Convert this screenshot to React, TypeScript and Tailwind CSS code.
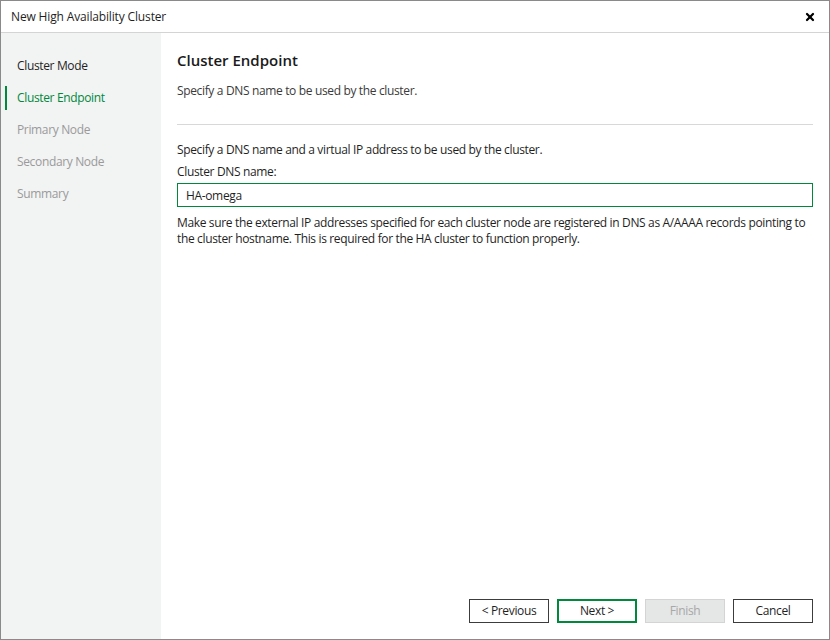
import { X } from 'lucide-react'

const steps = [
  { name: 'Cluster Mode', state: 'done' },
  { name: 'Cluster Endpoint', state: 'active' },
  { name: 'Primary Node', state: 'todo' },
  { name: 'Secondary Node', state: 'todo' },
  { name: 'Summary', state: 'todo' },
]

export default function App() {
  return (
    <div
      className="w-[830px] h-[640px] flex flex-col bg-white border border-[#8a8a8a] text-[12px] tracking-[-0.35px] text-[#1f1f1f]"
      style={{ fontFamily: '"Open Sans", "Noto Sans", sans-serif' }}
    >
      {/* title bar */}
      <div className="h-[32px] flex items-center justify-between pl-[10px] pr-[13px] border-b border-[#d4d4d4]">
        <span className="pt-[1px] tracking-[-0.15px]">New High Availability Cluster</span>
        <X className="w-[12px] h-[12px] text-black" strokeWidth={4.5} />
      </div>

      <div className="flex flex-1 min-h-0">
        {/* steps */}
        <div className="w-[160px] bg-[#f2f3f3] pt-[17px]">
          {steps.map((s) => (
            <div key={s.name} className="h-[32px] flex items-center relative pl-[16px]">
              {s.state === 'active' && (
                <div className="absolute left-[4px] top-[4px] w-[2px] h-[24px] bg-[#00883c]" />
              )}
              <span
                className={
                  s.state === 'active'
                    ? 'text-[#00883c]'
                    : s.state === 'done'
                      ? 'text-[#1f1f1f]'
                      : 'text-[#9a9a9a]'
                }
              >
                {s.name}
              </span>
            </div>
          ))}
        </div>

        {/* content */}
        <div className="flex-1 flex flex-col pl-[16px] pr-[16px]">
          <div className="pt-[17px]">
            <h1 className="text-[15px] font-semibold leading-[20px] tracking-normal text-[#1a1a1a]">Cluster Endpoint</h1>
            <p className="mt-[13px] leading-[16px] text-[#3a3a3a]">Specify a DNS name to be used by the cluster.</p>
          </div>
          <div className="mt-[25px] border-t border-[#d8d8d8]" />
          <p className="mt-[17px] leading-[16px]">Specify a DNS name and a virtual IP address to be used by the cluster.</p>
          <p className="mt-[6px] leading-[16px]">Cluster DNS name:</p>
          <input
            defaultValue="HA-omega"
            className="mt-[3px] h-[24px] border border-[#00883c] px-[8px] outline-none text-[12px] tracking-[-0.35px] text-[#1f1f1f]"
          />
          <p className="mt-[8px] leading-[16px]">
            Make sure the external IP addresses specified for each cluster node are registered in DNS as A/AAAA records pointing to
            the cluster hostname. This is required for the HA cluster to function properly.
          </p>

          <div className="mt-auto mb-[16px] flex justify-end gap-[8px]">
            <button className="w-[80px] h-[24px] border border-[#3c3c3c] bg-white">&lt; Previous</button>
            <button className="w-[80px] h-[24px] border-2 border-[#00883c] bg-white">Next &gt;</button>
            <button className="w-[80px] h-[24px] border border-[#d4d4d4] bg-[#e5e6e6] text-[#a8a8a8]">Finish</button>
            <button className="w-[80px] h-[24px] border border-[#3c3c3c] bg-white">Cancel</button>
          </div>
        </div>
      </div>
    </div>
  )
}
